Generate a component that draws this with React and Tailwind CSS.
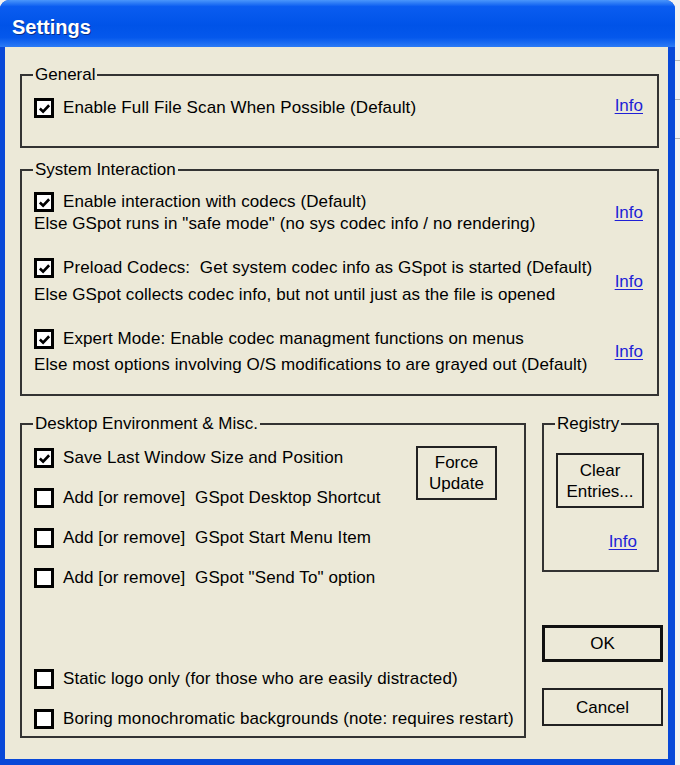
const font = { fontFamily: '"Liberation Sans", Arial, sans-serif' };

// ----------------- small XP controls -----------------
const CheckBox = ({ checked }) => (
  <span className="w-[20px] h-[20px] shrink-0 border-[3px] border-black bg-white flex items-center justify-center">
    {checked && (
      <svg viewBox="0 0 14 14" className="w-[13px] h-[13px]">
        <polyline points="2,7 5.5,10.5 12,3.5" fill="none" stroke="black" strokeWidth="2.8" />
      </svg>
    )}
  </span>
);

const Option = ({ checked, children, className = "" }) => (
  <div className={`flex items-center gap-[9px] h-[20px] leading-[20px] ${className}`}>
    <CheckBox checked={checked} />
    <span className="whitespace-pre tracking-[0.1px]">{children}</span>
  </div>
);

const InfoLink = ({ className = "" }) => (
  <a className={`text-[#1f1fd6] underline underline-offset-2 leading-[20px] ${className}`}>Info</a>
);

const GroupBox = ({ label, className = "", children }) => (
  <div className={`relative shrink-0 border-2 border-[#333] ${className}`}>
    <span className="absolute -top-[11px] left-[11px] px-[2px] bg-[#ECE9D8] leading-[20px] whitespace-pre">
      {label}
    </span>
    {children}
  </div>
);

const XpButton = ({ children, className = "" }) => (
  <button
    type="button"
    className={`shrink-0 bg-[#ECE9D8] text-black leading-[21px] flex flex-col items-center justify-center ${className}`}
  >
    {children}
  </button>
);

// ----------------- System Interaction row -----------------
const SysRow = ({ first, second, gap = "mt-0", className = "" }) => (
  <div className={`flex items-center pr-[14px] ${className}`}>
    <div className="flex flex-col">
      <div className="flex items-center gap-[9px] h-[22px]">
        <CheckBox checked />
        <span className="whitespace-pre tracking-[0.1px]">{first}</span>
      </div>
      <span className={`whitespace-pre tracking-[0.1px] leading-[22px] ${gap}`}>{second}</span>
    </div>
    <InfoLink className="ml-auto" />
  </div>
);

export default function App() {
  return (
    <div className="w-[680px] h-[765px] flex bg-[#f2f2f2] text-[17px] text-black" style={font}>
      <div className="w-[675px] h-[765px] shrink-0 flex flex-col rounded-t-[9px] overflow-hidden bg-[#0848d8]">
        {/* title bar */}
        <div className="h-[47px] shrink-0 flex items-center pl-[12px] pt-[7px] bg-[linear-gradient(180deg,#4a96fb_0%,#0a5cf0_14%,#0053e8_55%,#0558ec_80%,#2b7af5_100%)]">
          <span className="text-white font-bold text-[20px] leading-[24px] [text-shadow:1px_1px_0_#0a2f8a]">
            Settings
          </span>
        </div>

        {/* client area */}
        <div className="flex-1 ml-[5px] mr-[7px] mb-[6px] bg-[#ECE9D8] pl-[15px] pr-[5px] pt-[27px] flex flex-col">
          <GroupBox label="General" className="h-[74px] mr-[4px]">
            <div className="flex items-center pt-[22px] pl-[12px] pr-[14px]">
              <Option checked>Enable Full File Scan When Possible (Default)</Option>
              <InfoLink className="ml-auto -mt-[4px]" />
            </div>
          </GroupBox>

          <GroupBox label="System Interaction" className="mt-[21px] h-[227px] mr-[4px]">
            <div className="flex flex-col pl-[12px] pt-[20px]">
              <SysRow
                first="Enable interaction with codecs (Default)"
                second={'Else GSpot runs in "safe mode" (no sys codec info / no rendering)'}
              />
              <SysRow
                className="mt-[22px]"
                gap="mt-[5px]"
                first="Preload Codecs:  Get system codec info as GSpot is started (Default)"
                second="Else GSpot collects codec info, but not until just as the file is opened"
              />
              <SysRow
                className="mt-[22px]"
                gap="mt-[4px]"
                first="Expert Mode: Enable codec managment functions on menus"
                second="Else most options involving O/S modifications to are grayed out (Default)"
              />
            </div>
          </GroupBox>

          <div className="flex gap-[16px] mt-[27px]">
            <GroupBox label="Desktop Environment & Misc." className="w-[506px] h-[315px]">
              <div className="flex flex-col pl-[12px] pt-[23px]">
                <div className="flex items-start">
                  <div className="w-[382px] flex flex-col gap-[20px]">
                    <Option checked>Save Last Window Size and Position</Option>
                    <Option>Add [or remove]  GSpot Desktop Shortcut</Option>
                    <Option>Add [or remove]  GSpot Start Menu Item</Option>
                    <Option>Add [or remove]  GSpot "Send To" option</Option>
                  </div>
                  <XpButton className="w-[81px] h-[54px] -mt-[2px] border-2 border-[#222]">
                    <span>Force</span>
                    <span>Update</span>
                  </XpButton>
                </div>
                <Option className="mt-[81px]">Static logo only (for those who are easily distracted)</Option>
                <Option className="mt-[20px]">Boring monochromatic backgrounds (note: requires restart)</Option>
              </div>
            </GroupBox>

            <div className="w-[121px] shrink-0 flex flex-col">
              <GroupBox label="Registry" className="w-[117px] h-[149px]">
                <div className="flex flex-col pt-[28px] pl-[12px] pr-[20px]">
                  <XpButton className="w-[88px] h-[55px] border-2 border-[#222]">
                    <span>Clear</span>
                    <span>Entries...</span>
                  </XpButton>
                  <InfoLink className="self-end mt-[24px]" />
                </div>
              </GroupBox>
              <XpButton className="mt-[53px] w-[121px] h-[37px] border-[3px] border-[#111]">OK</XpButton>
              <XpButton className="mt-[26px] w-[121px] h-[38px] border-2 border-[#222]">Cancel</XpButton>
            </div>
          </div>
        </div>
      </div>
      <div className="flex-1 flex flex-col pt-[60px] gap-[38px]">
        <div className="h-px bg-[#b8b8b8]" />
        <div className="h-px bg-[#b8b8b8]" />
        <div className="h-px bg-[#b8b8b8]" />
      </div>
    </div>
  );
}
